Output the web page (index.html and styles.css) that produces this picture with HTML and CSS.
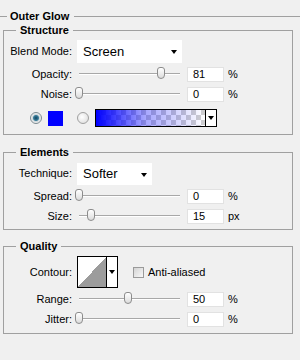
FILE: index.html
```html
<!DOCTYPE html>
<html lang="en">
<head>
  <meta charset="UTF-8" />
  <title>Outer Glow</title>
  <meta name="viewport" content="width=device-width, initial-scale=1" />
  <link rel="stylesheet" href="styles.css">
</head>
<body>
  <div class="title"><span>Outer Glow</span></div>

  <fieldset class="group structure">
    <legend>Structure</legend>
    <div class="row row-select">
      <label>Blend Mode:</label>
      <div class="select blend">Screen<i class="arrow"></i></div>
    </div>
    <div class="row">
      <label>Opacity:</label>
      <div class="slider"><span class="thumb" style="left: 81%"></span></div>
      <span class="num">81</span><span class="unit">%</span>
    </div>
    <div class="row">
      <label>Noise:</label>
      <div class="slider"><span class="thumb" style="left: 0%"></span></div>
      <span class="num">0</span><span class="unit">%</span>
    </div>
    <div class="row row-color">
      <span class="radio checked"></span>
      <span class="swatch"></span>
      <span class="radio"></span>
      <div class="gradient-pick">
        <span class="gradient"></span>
        <span class="drop"><i class="arrow"></i></span>
      </div>
    </div>
  </fieldset>

  <fieldset class="group elements">
    <legend>Elements</legend>
    <div class="row row-select">
      <label>Technique:</label>
      <div class="select technique">Softer<i class="arrow"></i></div>
    </div>
    <div class="row">
      <label>Spread:</label>
      <div class="slider"><span class="thumb" style="left: 0%"></span></div>
      <span class="num">0</span><span class="unit">%</span>
    </div>
    <div class="row">
      <label>Size:</label>
      <div class="slider"><span class="thumb" style="left: 12%"></span></div>
      <span class="num">15</span><span class="unit">px</span>
    </div>
  </fieldset>

  <fieldset class="group quality">
    <legend>Quality</legend>
    <div class="row row-contour">
      <label>Contour:</label>
      <div class="contour">
        <span class="curve"></span>
        <span class="drop"><i class="arrow"></i></span>
      </div>
      <span class="check"></span>
      <span class="check-label">Anti-aliased</span>
    </div>
    <div class="row">
      <label>Range:</label>
      <div class="slider"><span class="thumb" style="left: 49%"></span></div>
      <span class="num">50</span><span class="unit">%</span>
    </div>
    <div class="row">
      <label>Jitter:</label>
      <div class="slider"><span class="thumb" style="left: 0%"></span></div>
      <span class="num">0</span><span class="unit">%</span>
    </div>
  </fieldset>
</body>
</html>
```

FILE: styles.css
```css
body {
  margin: 0;
  background: #f0f0f0;
  color: #000;
  font-family: "Liberation Sans", Arial, sans-serif;
  font-size: 11px;
  line-height: 13px;
}
.title {
  display: flex;
  align-items: center;
  margin-top: 10px;
  font-weight: bold;
}
.title::before,
.title::after {
  content: '';
  height: 1px;
  background: #a0a0a0;
}
.title::before {
  width: 7px;
  margin-right: 3px;
}
.title::after {
  flex: 1;
  margin-left: 5px;
}
.group {
  box-sizing: border-box;
  width: 290px;
  margin: 1px 0 0 3px;
  padding: 0;
  border: 1px solid #a0a0a0;
}
legend {
  margin-left: 12px;
  padding: 0 4px;
  font-weight: bold;
  line-height: 13px;
}
.row {
  display: flex;
  align-items: center;
  height: 20px;
}
.row label {
  width: 68px;
  text-align: right;
}
.row-select {
  height: 23px;
  margin: 3px 0 1px;
}
.select {
  position: relative;
  box-sizing: border-box;
  height: 23px;
  margin-left: 5px;
  padding-left: 6px;
  background: #fff;
  font-size: 13px;
  line-height: 23px;
}
.select.blend {
  width: 105px;
}
.select.technique {
  width: 75px;
  height: 22px;
  line-height: 22px;
}
.arrow {
  width: 0;
  height: 0;
  border-left: 3px solid transparent;
  border-right: 3px solid transparent;
  border-top: 4px solid #000;
}
.select .arrow {
  position: absolute;
  right: 5px;
  top: 10px;
}
.slider {
  position: relative;
  width: 101px;
  height: 1px;
  margin-left: 7px;
  border-top: 1px solid #a8a8a8;
  background: #fff;
}
.thumb {
  position: absolute;
  top: -7px;
  box-sizing: border-box;
  width: 8px;
  height: 12px;
  margin-left: -4px;
  border: 1px solid #8c8c8c;
  border-radius: 3px 3px 4px 4px;
  background: linear-gradient(#fff, #dcdcdc);
}
.num {
  box-sizing: border-box;
  width: 37px;
  height: 15px;
  margin-left: 7px;
  padding-left: 5px;
  background: #fff;
  border: 1px solid #e2e2e2;
  line-height: 13px;
}
.unit {
  margin-left: 4px;
}

/* Colour row */
.row-color {
  height: 28px;
  margin-bottom: 2px;
}
.radio {
  box-sizing: border-box;
  width: 12px;
  height: 12px;
  border: 1px solid #a0a0a0;
  border-radius: 50%;
  background: radial-gradient(circle at 40% 40%, #fff, #d8d8d8);
}
.radio.checked {
  margin-left: 26px;
  border-color: #7c8a90;
  background: radial-gradient(circle, #0f4460 0, #3a7e9a 2.5px, #cfd8dc 3.5px, #f4f4f4 5px);
}
.swatch {
  width: 15px;
  height: 15px;
  margin: 0 14px 0 6px;
  background: #0000ff;
}
.gradient-pick {
  display: flex;
  box-sizing: border-box;
  width: 122px;
  height: 18px;
  margin-left: 6px;
  border: 1px solid #000;
  background: #fff;
}
.gradient {
  flex: 1;
  background:
    linear-gradient(to right, #0000ff, rgba(0, 0, 255, 0.35) 45%, rgba(0, 0, 255, 0)),
    repeating-conic-gradient(#cfcfcf 0 25%, #fff 0 50%) 0 0 / 10px 10px;
}
.drop {
  display: flex;
  align-items: center;
  justify-content: center;
  width: 10px;
  border-left: 1px solid #000;
  background: #fff;
}

/* Elements */
.elements {
  margin-top: 11px;
  padding-bottom: 3px;
}

/* Quality */
.quality {
  margin-top: 10px;
  padding-bottom: 4px;
}
.row-contour {
  height: 32px;
  margin: 3px 0 1px;
}
.contour {
  display: flex;
  box-sizing: border-box;
  width: 41px;
  height: 32px;
  margin-left: 5px;
  border: 1px solid #000;
  background: #fff;
}
.curve {
  flex: 1;
  background: linear-gradient(to bottom right, #fff 50%, #9c9c9c 50%);
}
.check {
  box-sizing: border-box;
  width: 11px;
  height: 11px;
  margin-left: 15px;
  border: 1px solid #9a9a9a;
  background: linear-gradient(135deg, #d4d4d4, #f8f8f8);
}
.check-label {
  margin-left: 4px;
}
```
